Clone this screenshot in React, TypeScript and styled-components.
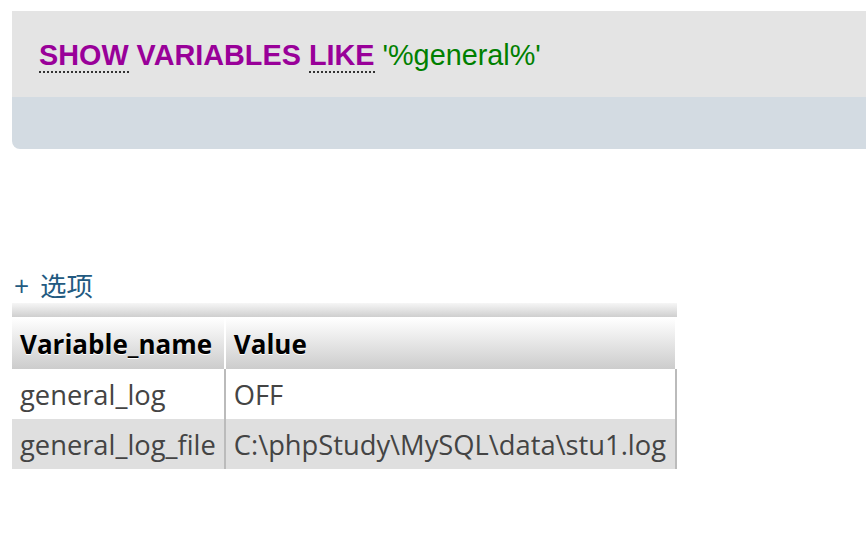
import React from "react";
import styled, { createGlobalStyle } from "styled-components";

const Global = createGlobalStyle`
  html, body { margin: 0; padding: 0; background: #fff; overflow: hidden; }
  body { font-family: "Open Sans", "Noto Sans", sans-serif; }
`;

const Panel = styled.div`
  margin: 11px 0 0 12px;
  border-bottom-left-radius: 8px;
  overflow: hidden;
`;

const SqlBox = styled.div`
  height: 86px;
  box-sizing: border-box;
  background: #e4e4e4;
  padding: 26px 0 0 27px;
  font-family: "Liberation Sans", Arial, sans-serif;
  font-size: 28.8px;
  line-height: 36px;
  white-space: nowrap;
`;

const Keyword = styled.span<{ $doc?: boolean }>`
  color: #990099;
  font-weight: bold;
  ${(p) => (p.$doc ? "border-bottom: 2px dotted #333;" : "")}
`;

const Str = styled.span`
  color: #008000;
`;

const ToolBar = styled.div`
  height: 52px;
  background: #d3dbe2;
`;

const Options = styled.a`
  display: block;
  margin: 121px 0 0 14px;
  height: 33px;
  line-height: 33px;
  font-family: "Open Sans", "Noto Sans CJK SC", sans-serif;
  font-size: 26.5px;
  word-spacing: 4px;
  color: #235a81;
  text-decoration: none;
`;

const Table = styled.table`
  margin: 0 0 0 12px;
  border-collapse: separate;
  border-spacing: 0;
  font-family: "Open Sans", "Noto Sans", sans-serif;
  font-size: 27.3px;
`;

const Strip = styled.th`
  height: 14px;
  padding: 0;
  border-bottom: 1px solid #fff;
  background: linear-gradient(#f6f6f6, #cfcfcf);
`;

const Head = styled.th<{ $last?: boolean }>`
  height: 51px;
  box-sizing: border-box;
  padding: 0 8px;
  text-align: left;
  font-size: 26px;
  font-weight: bold;
  color: #000;
  text-shadow: 0 1px 0 #fff;
  background: linear-gradient(#ffffff, #cccccc);
  white-space: nowrap;
  ${(p) =>
    p.$last
      ? "border-right: 2px solid transparent; background-clip: padding-box;"
      : "border-right: 2px solid #fff;"}
`;

const Row = styled.tr<{ $odd?: boolean }>`
  background: ${(p) => (p.$odd ? "#fff" : "#dfdfdf")};
`;

const Cell = styled.td<{ $last?: boolean }>`
  height: 50px;
  box-sizing: border-box;
  padding: 0 8px;
  color: #444;
  white-space: nowrap;
  border-right: 2px solid #bbb;
  ${(p) => (p.$last ? "width: 451px;" : "")}
`;

const rows = [
  ["general_log", "OFF"],
  ["general_log_file", "C:\\phpStudy\\MySQL\\data\\stu1.log"],
];

export default function App() {
  return (
    <>
      <Global />
      <Panel>
        <SqlBox>
          <Keyword $doc>SHOW</Keyword> <Keyword>VARIABLES</Keyword>{" "}
          <Keyword $doc>LIKE</Keyword> <Str>'%general%'</Str>
        </SqlBox>
        <ToolBar />
      </Panel>
      <Options href="#">+ 选项</Options>
      <Table>
        <thead>
          <tr>
            <Strip colSpan={2} />
          </tr>
          <tr>
            <Head>Variable_name</Head>
            <Head $last>Value</Head>
          </tr>
        </thead>
        <tbody>
          {rows.map((r, i) => (
            <Row key={r[0]} $odd={i % 2 === 0}>
              <Cell>{r[0]}</Cell>
              <Cell $last>{r[1]}</Cell>
            </Row>
          ))}
        </tbody>
      </Table>
    </>
  );
}
